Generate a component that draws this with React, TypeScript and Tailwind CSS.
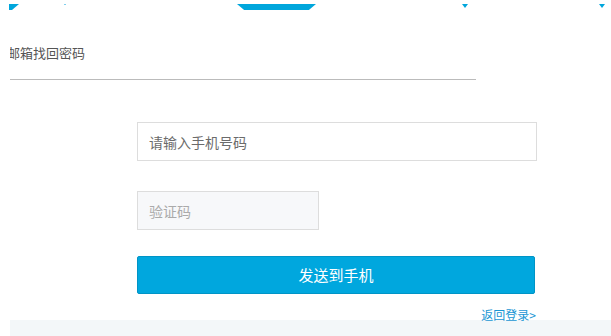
export default function App() {
  return (
    <div
      className="w-[611px] h-[336px] overflow-hidden bg-white"
      style={{ fontFamily: '"Noto Sans CJK SC", "Noto Sans", sans-serif' }}
    >
      {/* Tab indicator fragments */}
      <div className="flex h-[12px] items-start pt-[4px]">
        <div className="ml-[9px] w-[10px] h-[6px] bg-[#00a6dc] [clip-path:polygon(0_0,100%_0,30%_100%,0_100%)]" />
        <div className="ml-[45px] w-[2px] h-[1px] bg-[#7fcfee]" />
        <div className="ml-[171px] w-[79px] h-[6px] bg-[#00a6dc] [clip-path:polygon(0_0,100%_0,91%_100%,9%_100%)]" />
        <div className="ml-[146px] w-[6px] h-[4px] bg-[#00a6dc] [clip-path:polygon(0_0,100%_0,50%_100%)]" />
        <div className="ml-[131px] w-[6px] h-[4px] bg-[#00a6dc] [clip-path:polygon(0_0,100%_0,50%_100%)]" />
      </div>

      {/* Title */}
      <div className="ml-[10px] mt-[31px] overflow-hidden">
        <div className="-ml-[3px] text-[13px] leading-[20px] text-[#555] whitespace-nowrap">邮箱找回密码</div>
      </div>
      <div className="ml-[10px] mt-[16px] w-[466px] h-px bg-[#bbb]" />

      {/* Form */}
      <div className="pl-[137px] flex flex-col">
        <input
          className="mt-[42px] w-[400px] h-[39px] border border-[#ddd] px-[11px] text-[14px] text-[#333] outline-none placeholder:text-[#6b6b6b]"
          placeholder="请输入手机号码"
        />
        <input
          className="mt-[30px] w-[182px] h-[39px] border border-[#ddd] bg-[#f7f8fa] px-[11px] text-[14px] text-[#333] outline-none placeholder:text-[#aaa]"
          placeholder="验证码"
        />
        <button
          type="button"
          className="mt-[26px] w-[398px] h-[38px] bg-[#00a7de] border border-[#0094c6] rounded-[2px] text-white text-[15px] leading-[20px]"
        >
          发送到手机
        </button>
        <div className="relative z-10 mt-[13px] w-[399px] h-[13px] flex justify-end">
          <a href="#" className="text-[12px] leading-[16px] text-[#1a96d4] whitespace-nowrap">
            返回登录&gt;
          </a>
        </div>
      </div>

      {/* Footer strip */}
      <div className="ml-[10px] h-[16px] bg-[#f3f7f9]" />
    </div>
  );
}
